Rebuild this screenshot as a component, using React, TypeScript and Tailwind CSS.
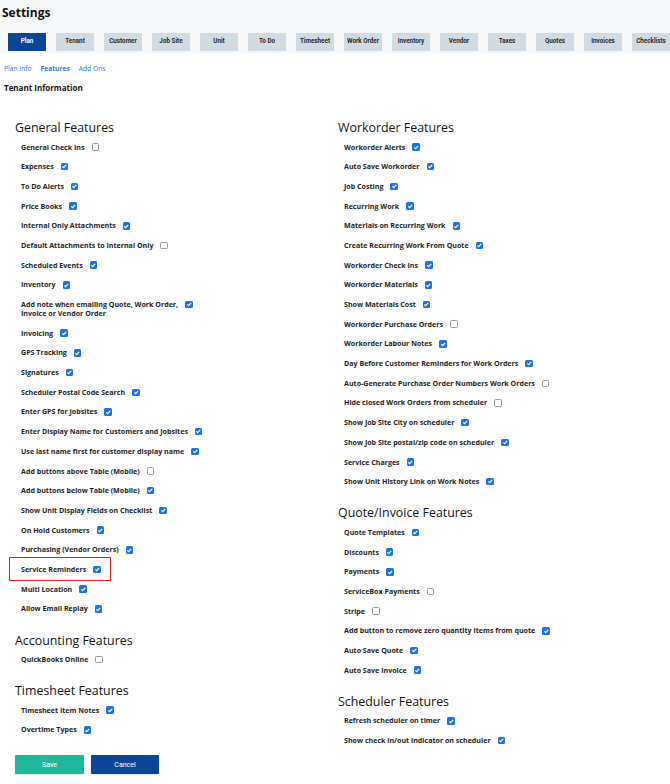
import type { ReactElement } from 'react';

const TABS = [
  'Plan',
  'Tenant',
  'Customer',
  'Job Site',
  'Unit',
  'To Do',
  'Timesheet',
  'Work Order',
  'Inventory',
  'Vendor',
  'Taxes',
  'Quotes',
  'Invoices',
  'Checklists',
];

type Feature = { label: string; checked: boolean; second?: string; highlight?: boolean };
type Section = { title: string; items: Feature[] };

const LEFT: Section[] = [
  {
    title: 'General Features',
    items: [
      { label: 'General Check Ins', checked: false },
      { label: 'Expenses', checked: true },
      { label: 'To Do Alerts', checked: true },
      { label: 'Price Books', checked: true },
      { label: 'Internal Only Attachments', checked: true },
      { label: 'Default Attachments to Internal Only', checked: false },
      { label: 'Scheduled Events', checked: true },
      { label: 'Inventory', checked: true },
      {
        label: 'Add note when emailing Quote, Work Order,',
        second: 'Invoice or Vendor Order',
        checked: true,
      },
      { label: 'Invoicing', checked: true },
      { label: 'GPS Tracking', checked: true },
      { label: 'Signatures', checked: true },
      { label: 'Scheduler Postal Code Search', checked: true },
      { label: 'Enter GPS for Jobsites', checked: true },
      { label: 'Enter Display Name for Customers and Jobsites', checked: true },
      { label: 'Use last name first for customer display name', checked: true },
      { label: 'Add buttons above Table (Mobile)', checked: false },
      { label: 'Add buttons below Table (Mobile)', checked: true },
      { label: 'Show Unit Display Fields on Checklist', checked: true },
      { label: 'On Hold Customers', checked: true },
      { label: 'Purchasing (Vendor Orders)', checked: true },
      { label: 'Service Reminders', checked: true, highlight: true },
      { label: 'Multi Location', checked: true },
      { label: 'Allow Email Replay', checked: true },
    ],
  },
  {
    title: 'Accounting Features',
    items: [{ label: 'QuickBooks Online', checked: false }],
  },
  {
    title: 'Timesheet Features',
    items: [
      { label: 'Timesheet Item Notes', checked: true },
      { label: 'Overtime Types', checked: true },
    ],
  },
];

const RIGHT: Section[] = [
  {
    title: 'Workorder Features',
    items: [
      { label: 'Workorder Alerts', checked: true },
      { label: 'Auto Save Workorder', checked: true },
      { label: 'Job Costing', checked: true },
      { label: 'Recurring Work', checked: true },
      { label: 'Materials on Recurring Work', checked: true },
      { label: 'Create Recurring Work From Quote', checked: true },
      { label: 'Workorder Check Ins', checked: true },
      { label: 'Workorder Materials', checked: true },
      { label: 'Show Materials Cost', checked: true },
      { label: 'Workorder Purchase Orders', checked: false },
      { label: 'Workorder Labour Notes', checked: true },
      { label: 'Day Before Customer Reminders for Work Orders', checked: true },
      { label: 'Auto-Generate Purchase Order Numbers Work Orders', checked: false },
      { label: 'Hide closed Work Orders from scheduler', checked: false },
      { label: 'Show Job Site City on scheduler', checked: true },
      { label: 'Show Job Site postal/zip code on scheduler', checked: true },
      { label: 'Service Charges', checked: true },
      { label: 'Show Unit History Link on Work Notes', checked: true },
    ],
  },
  {
    title: 'Quote/Invoice Features',
    items: [
      { label: 'Quote Templates', checked: true },
      { label: 'Discounts', checked: true },
      { label: 'Payments', checked: true },
      { label: 'ServiceBox Payments', checked: false },
      { label: 'Stripe', checked: false },
      { label: 'Add button to remove zero quantity items from quote', checked: true },
      { label: 'Auto Save Quote', checked: true },
      { label: 'Auto Save Invoice', checked: true },
    ],
  },
  {
    title: 'Scheduler Features',
    items: [
      { label: 'Refresh scheduler on timer', checked: true },
      { label: 'Show check in/out indicator on scheduler', checked: true },
    ],
  },
];

const Checkbox = ({ checked }: { checked: boolean }): ReactElement =>
  checked ? (
    <span className="flex h-[7.5px] w-[7.5px] shrink-0 items-center justify-center rounded-[1.5px] bg-[#1a73e8]">
      <svg viewBox="0 0 10 10" className="h-[6.5px] w-[6.5px]">
        <path d="M2 5.2 4.1 7.3 8 2.8" fill="none" stroke="#fff" strokeWidth="1.8" />
      </svg>
    </span>
  ) : (
    <span className="h-[7.5px] w-[7.5px] shrink-0 rounded-[1.5px] border border-[#9a9a9a] bg-white" />
  );

const FeatureRow = ({ item }: { item: Feature }): ReactElement => (
  <div className="relative flex items-start gap-[7px] pl-[6px] leading-[9px]">
    {item.highlight && (
      <div className="absolute -top-[7.5px] -left-[6px] h-[24px] w-[102px] border-[1.5px] border-[#e02020]" />
    )}
    <span className="whitespace-nowrap">
      {item.label}
      {item.second && (
        <>
          <br />
          {item.second}
        </>
      )}
    </span>
    <span className="flex h-[9px] items-center">
      <Checkbox checked={item.checked} />
    </span>
  </div>
);

const FeatureSection = ({ section }: { section: Section }): ReactElement => (
  <div className="flex flex-col">
    <h2 className="text-[12.4px] leading-[14px] font-medium text-[#111]">{section.title}</h2>
    <div className="mt-[7.5px] flex flex-col gap-[10.7px] text-[7.1px] font-bold text-[#1e1e1e]">
      {section.items.map((item) => (
        <FeatureRow key={item.label} item={item} />
      ))}
    </div>
  </div>
);

export default function App(): ReactElement {
  return (
    <div className="min-h-[784px] w-[670px] overflow-hidden bg-white font-['Open_Sans',sans-serif] text-[#111]">
      <div className="bg-[#f7f8fa] pb-[2px]">
        <h1 className="px-[2px] pt-[4px] text-[12px] leading-[17px] font-bold">Settings</h1>
        <div className="mt-[12px] flex gap-[10px] pl-[8px] font-['Roboto',sans-serif]">
          {TABS.map((tab) => (
            <div
              key={tab}
              className={
                tab === 'Plan'
                  ? 'flex h-[17.5px] w-[38px] shrink-0 items-center justify-center bg-[#0b4595] text-[6.3px] font-bold text-white'
                  : 'flex h-[17.5px] w-[38px] shrink-0 items-center justify-center bg-[#d3dbe2] text-[6.3px] font-bold text-[#2a2a2a]'
              }
            >
              {tab}
            </div>
          ))}
        </div>
      </div>

      <div className="flex gap-[9px] px-[4px] pt-[11px] text-[6.7px] leading-[9px] text-[#2f7be0]">
        <span>Plan Info</span>
        <span className="font-bold">Features</span>
        <span>Add Ons</span>
      </div>
      <div className="px-[4px] pt-[10px] text-[8px] leading-[10px] font-bold">Tenant Information</div>

      <div className="mt-[28.5px] grid grid-cols-[323px_1fr] pl-[15px]">
        <div className="flex flex-col">
          <div className="flex flex-col gap-[20.2px]">
            {LEFT.map((s) => (
              <FeatureSection key={s.title} section={s} />
            ))}
          </div>
          <div className="mt-[21px] flex gap-[7px]">
            <button className="h-[19px] w-[69px] rounded-[1px] bg-[#1fb99a] font-['Roboto',sans-serif] text-[7px] text-white shadow-sm">
              Save
            </button>
            <button className="h-[19px] w-[68px] rounded-[1px] bg-[#0b4595] font-['Roboto',sans-serif] text-[7px] text-white shadow-sm">
              Cancel
            </button>
          </div>
        </div>
        <div className="flex flex-col gap-[20.2px]">
          {RIGHT.map((s) => (
            <FeatureSection key={s.title} section={s} />
          ))}
        </div>
      </div>
    </div>
  );
}
